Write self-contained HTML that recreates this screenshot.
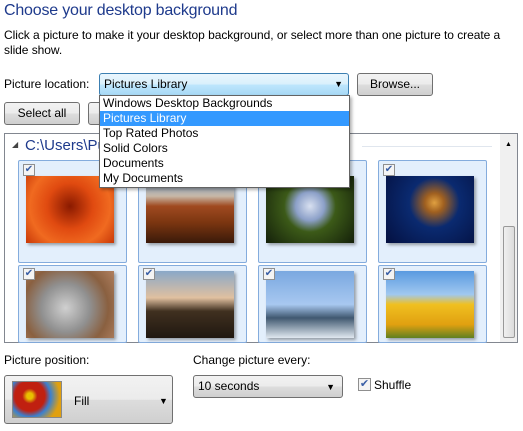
<!DOCTYPE html>
<html><head><style>
*{margin:0;padding:0;box-sizing:border-box}
body{width:523px;height:431px;background:#fff;font-family:"Liberation Sans",sans-serif;font-size:12px;color:#000;position:relative;overflow:hidden}
.a{position:absolute;white-space:nowrap}
.btn{position:absolute;border:1px solid #707070;border-radius:3px;background:linear-gradient(#f2f2f2 0%,#ebebeb 50%,#dddddd 51%,#cfcfcf 100%);text-align:center;line-height:20px}
.tile{position:absolute;border:1px solid #84acdd;border-radius:2px;background:#e3effc;width:109px}
.cb{position:absolute;z-index:2;width:12px;height:12px;border:1px solid #8f8f8f;background:#f4f4f4;color:#3a5fa6;font-size:10px;line-height:10px;text-align:center}
.img{position:absolute;box-shadow:2px 2px 3px rgba(0,0,0,.35)}
</style></head><body>
<div class="a" style="left:4px;top:2px;font-size:16px;color:#1e3a8c;letter-spacing:-0.2px">Choose your desktop background</div>
<div class="a" style="left:4px;top:28px;line-height:15px;letter-spacing:-0.05px">Click a picture to make it your desktop background, or select more than one picture to create a<br>slide show.</div>
<div class="a" style="left:4px;top:77px">Picture location:</div>
<div class="a" style="left:99px;top:73px;width:250px;height:23px;border:1px solid #3c7fb1;border-radius:3px;background:linear-gradient(#eaf6fd,#d9f0fc 50%,#bee6fd 51%,#a7d9f5);padding-left:4px;line-height:21px">Pictures Library<span style="position:absolute;right:5px;top:0;font-size:9px">▼</span></div>
<div class="btn" style="left:357px;top:73px;width:76px;height:23px">Browse...</div>
<div class="btn" style="left:4px;top:102px;width:76px;height:23px">Select all</div>
<div class="btn" style="left:88px;top:102px;width:80px;height:23px"></div>
<div class="a" style="left:4px;top:133px;width:514px;height:210px;border:1px solid #828790;background:#fff"></div>
<div class="a" style="left:500px;top:134px;width:17px;height:208px;background:#f0f0f0"></div>
<div class="a" style="left:503px;top:226px;width:12px;height:112px;border:1px solid #999;border-radius:2px;background:linear-gradient(90deg,#f0f0f0,#dcdcdc)"></div>
<div class="a" style="left:505px;top:141px;font-size:7px">▲</div>
<div class="a" style="left:12px;top:140px;font-size:8px;color:#444">◢</div>
<div class="a" style="left:25px;top:137px;font-size:15px;color:#1e3a8c">C:\Users\Public\Pictures\Sample Pictures (8)</div>
<div class="a" style="left:362px;top:146px;width:130px;height:1px;background:#e0e6ee"></div>
<div class="tile" style="left:18px;top:160px;height:103px"></div>
<div class="tile" style="left:138px;top:160px;height:103px"></div>
<div class="tile" style="left:258px;top:160px;height:103px"></div>
<div class="tile" style="left:378px;top:160px;height:103px"></div>
<div class="tile" style="left:18px;top:265px;height:78px"></div>
<div class="tile" style="left:138px;top:265px;height:78px"></div>
<div class="tile" style="left:258px;top:265px;height:78px"></div>
<div class="tile" style="left:378px;top:265px;height:78px"></div>
<div class="cb" style="left:23px;top:164px">✔</div><div class="cb" style="left:143px;top:164px">✔</div><div class="cb" style="left:263px;top:164px">✔</div><div class="cb" style="left:383px;top:164px">✔</div>
<div class="cb" style="left:23px;top:268px">✔</div><div class="cb" style="left:143px;top:268px">✔</div><div class="cb" style="left:263px;top:268px">✔</div><div class="cb" style="left:383px;top:268px">✔</div>
<div class="img" style="left:26px;top:176px;width:88px;height:67px;background:radial-gradient(circle at 50% 45%,#8a1a00,#e04a10 40%,#f06a20 70%,#c83808)"></div>
<div class="img" style="left:146px;top:176px;width:88px;height:67px;background:linear-gradient(#6d9acb 0%,#c7b8a8 30%,#a04a20 45%,#7a3510 70%,#3a1a0a)"></div>
<div class="img" style="left:266px;top:176px;width:88px;height:67px;background:radial-gradient(circle at 50% 45%,#d8e0f0,#8ca0c8 25%,#3c5a18 45%,#14200a)"></div>
<div class="img" style="left:386px;top:176px;width:88px;height:67px;background:radial-gradient(circle at 55% 40%,#e0a040,#a06020 15%,#0a2a70 40%,#041040)"></div>
<div class="img" style="left:26px;top:271px;width:88px;height:67px;background:radial-gradient(circle at 45% 55%,#d0d0d0,#909090 40%,#8a6040 70%,#b08060)"></div>
<div class="img" style="left:146px;top:271px;width:88px;height:67px;background:linear-gradient(#8aa8c8,#e0c0a0 40%,#403020 60%,#201810)"></div>
<div class="img" style="left:266px;top:271px;width:88px;height:67px;background:linear-gradient(#7aa8e0,#a8c8f0 50%,#405870 70%,#e0e8f0)"></div>
<div class="img" style="left:386px;top:271px;width:88px;height:67px;background:linear-gradient(#5a9ae0,#a0c8f0 35%,#f0c020 50%,#e0a010 80%,#608020)"></div>
<div class="a" style="left:99px;top:95px;width:251px;height:93px;z-index:5;border:1px solid #646464;background:#fff;box-shadow:2px 2px 3px rgba(0,0,0,.3);line-height:15px;font-size:12px">
<div style="padding-left:3px">Windows Desktop Backgrounds</div>
<div style="padding-left:3px;background:#3399ff;color:#fff">Pictures Library</div>
<div style="padding-left:3px">Top Rated Photos</div>
<div style="padding-left:3px">Solid Colors</div>
<div style="padding-left:3px">Documents</div>
<div style="padding-left:3px">My Documents</div></div>
<div class="a" style="left:4px;top:353px">Picture position:</div>
<div class="a" style="left:193px;top:353px">Change picture every:</div>
<div class="btn" style="left:4px;top:375px;width:169px;height:49px;text-align:left"></div>
<div class="a" style="left:12px;top:381px;width:50px;height:37px;border:1px solid #888;background:radial-gradient(circle at 35% 40%,#e8c000 8%,#c02010 20%,#c02010 40%,#3a80d0 55%,#e0a010 80%)"></div>
<div class="a" style="left:74px;top:394px">Fill</div>
<div class="a" style="left:159px;top:396px;font-size:9px">▼</div>
<div class="btn" style="left:193px;top:375px;width:150px;height:23px;text-align:left;padding-left:4px">10 seconds<span style="position:absolute;right:7px;top:1px;font-size:9px">▼</span></div>
<div class="cb" style="left:358px;top:378px;width:13px;height:13px;font-size:11px">✔</div>
<div class="a" style="left:374px;top:378px">Shuffle</div>
</body></html>
